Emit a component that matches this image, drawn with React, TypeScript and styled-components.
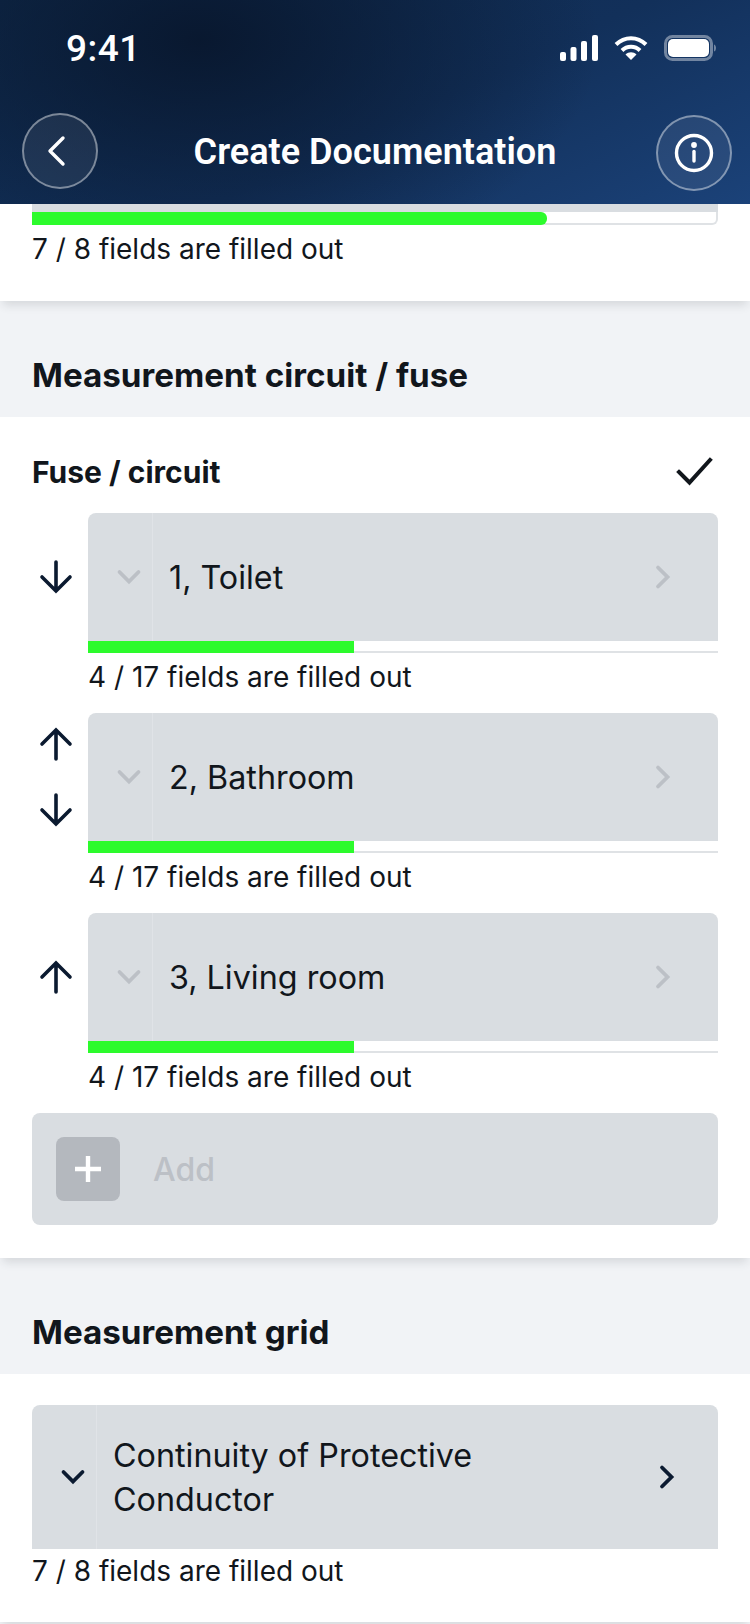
import React, { FC } from 'react';
import styled, { createGlobalStyle } from 'styled-components';

const colours = {
  ink: '#11161c',
  navy: '#0b1a30',
  panel: '#d9dde1',
  page: '#f1f3f6',
  green: '#2cfb2c',
  muted: '#bcc0c6',
};

const GlobalStyle = createGlobalStyle`
  html, body {
    margin: 0;
    padding: 0;
    background: ${colours.page};
    font-family: Inter, "Liberation Sans", sans-serif;
    color: ${colours.ink};
  }
  * { box-sizing: border-box; }
`;

const Screen = styled.div`
  width: 750px;
  height: 1624px;
  overflow: hidden;
  background: ${colours.page};
`;

const Header = styled.header`
  height: 204px;
  background:
    radial-gradient(ellipse 400px 240px at 200px 40px, rgba(8, 22, 44, 0.9), rgba(8, 22, 44, 0) 100%),
    linear-gradient(155deg, #0f2a4c 0%, #12305a 55%, #1b4279 100%);
  color: #fff;
  display: flex;
  flex-direction: column;
`;

const StatusBar = styled.div`
  height: 113px;
  padding: 29px 34px 0 66px;
  display: flex;
  justify-content: space-between;
  align-items: flex-start;
`;

const Clock = styled.span`
  font-family: Roboto, sans-serif;
  font-size: 37px;
  font-weight: 500;
  line-height: 40px;
  letter-spacing: 0.5px;
`;

const StatusIcons = styled.div`
  display: flex;
  align-items: center;
  gap: 16px;
  height: 38px;
`;

const NavBar = styled.div`
  height: 76px;
  padding: 0 18px 0 22px;
  display: flex;
  align-items: center;
  justify-content: space-between;
`;

const RoundButton = styled.div<{ $shift?: number }>`
  width: 76px;
  height: 76px;
  border-radius: 50%;
  border: 2px solid rgba(255, 255, 255, 0.42);
  background: rgba(255, 255, 255, 0.07);
  display: flex;
  align-items: center;
  justify-content: center;
  margin-top: ${(p) => p.$shift ?? 0}px;

  svg.back {
    margin-right: 6px;
  }
`;

const NavTitle = styled.h1`
  margin: 0;
  padding: 2px 4px 0 0;
  font-family: Roboto, sans-serif;
  font-size: 36.100px;
  font-weight: 600;
  line-height: 40px;
  text-align: center;
  flex: 1;
`;

const WhiteSection = styled.section<{ $top: number; $height: number }>`
  background: #fff;
  padding: ${(p) => p.$top}px 32px 0;
  height: ${(p) => p.$height}px;
  box-shadow: 0 7px 9px -3px rgba(40, 50, 60, 0.14);
  position: relative;
`;

const Strip = styled.div`
  height: 8px;
  background: ${colours.panel};
`;

const Track = styled.div<{ $round?: boolean }>`
  height: ${(p) => (p.$round ? 13 : 12)}px;
  background: #fff;
  border-bottom: 2px solid #dfe2e5;
  border-right: ${(p) => (p.$round ? '2px solid #dfe2e5' : 'none')};
  border-radius: ${(p) => (p.$round ? '0 0 6px 0' : '0')};
`;

const Fill = styled.div<{ $round?: boolean }>`
  height: ${(p) => (p.$round ? 13 : 12)}px;
  background: ${colours.green};
  border-radius: ${(p) => (p.$round ? '0 6px 6px 0' : '0')};
`;

const Fields = styled.div<{ $gap?: number }>`
  font-size: 28px;
  line-height: 32px;
  margin-top: ${(p) => p.$gap ?? 8}px;
  color: ${colours.ink};
`;

const SectionHeading = styled.h2<{ $height: number }>`
  margin: 0;
  height: ${(p) => p.$height}px;
  padding: 0 32px 22px;
  display: flex;
  align-items: flex-end;
  font-size: 33.200px;
  line-height: 40px;
  font-weight: 700;
  color: ${colours.ink};
`;

const SubHeader = styled.div`
  display: flex;
  justify-content: space-between;
  align-items: center;
  height: 38px;
  font-size: 30px;
  font-weight: 700;

  svg {
    margin-right: 4px;
  }
`;

const CircuitList = styled.div`
  margin-top: 22px;
  display: flex;
  flex-direction: column;
  gap: 12px;
`;

const CircuitRow = styled.div`
  display: flex;
  height: 188px;
`;

const ArrowColumn = styled.div`
  width: 56px;
  height: 128px;
  flex-shrink: 0;
  display: flex;
  flex-direction: column;
  align-items: center;
  justify-content: center;
  gap: 30px;
  padding-right: 8px;
`;

const CircuitBody = styled.div`
  flex: 1;
`;

const Card = styled.div<{ $height: number }>`
  height: ${(p) => p.$height}px;
  background: ${colours.panel};
  border-radius: 8px 8px 0 0;
  display: flex;
`;

const CardToggle = styled.div`
  width: 65px;
  flex-shrink: 0;
  padding-left: 17px;
  border-right: 1px solid #e0e3e7;
  display: flex;
  align-items: center;
  justify-content: center;
`;

const CardLabel = styled.div`
  flex: 1;
  padding: 2px 0 0 16px;
  font-size: 32.300px;
  line-height: 44px;
  display: flex;
  align-items: center;
`;

const CardNext = styled.div<{ $width: number }>`
  width: ${(p) => p.$width}px;
  display: flex;
  align-items: center;
  justify-content: center;
`;

const AddBar = styled.div`
  margin-top: 12px;
  height: 112px;
  background: ${colours.panel};
  border-radius: 8px;
  display: flex;
  align-items: center;
  padding-left: 24px;
  gap: 33px;
`;

const AddSquare = styled.div`
  width: 64px;
  height: 64px;
  border-radius: 8px;
  background: #b4b8be;
  display: flex;
  align-items: center;
  justify-content: center;
`;

const AddLabel = styled.span`
  font-size: 32px;
  font-weight: 500;
  color: ${colours.muted};
`;

const Chevron: FC<{ dir: 'down' | 'right'; colour: string }> = ({ dir, colour }) => (
  <svg width="28" height="28" viewBox="0 0 28 28" fill="none" stroke={colour} strokeWidth="3.8" strokeLinecap="round" strokeLinejoin="miter">
    {dir === 'down' ? <path d="M4.500 9l9.500 9.500L23.500 9" /> : <path d="M9 4.500l9.500 9.500L9 23.500" />}
  </svg>
);

const Arrow: FC<{ dir: 'up' | 'down' }> = ({ dir }) => (
  <svg width="36" height="36" viewBox="0 0 36 36" fill="none" stroke={colours.navy} strokeWidth="3.6" strokeLinecap="round" strokeLinejoin="miter">
    {dir === 'down' ? <path d="M18 3v29M4 18l14 14 14-14" /> : <path d="M18 33V4M4 18L18 4l14 14" />}
  </svg>
);

const Circuit: FC<{ label: string; up?: boolean; down?: boolean }> = ({ label, up, down }) => (
  <CircuitRow>
    <ArrowColumn>
      {up && <Arrow dir="up" />}
      {down && <Arrow dir="down" />}
    </ArrowColumn>
    <CircuitBody>
      <Card $height={128}>
        <CardToggle>
          <Chevron dir="down" colour={colours.muted} />
        </CardToggle>
        <CardLabel>{label}</CardLabel>
        <CardNext $width={111}>
          <Chevron dir="right" colour={colours.muted} />
        </CardNext>
      </Card>
      <Track>
        <Fill style={{ width: '42.300%' }} />
      </Track>
      <Fields>4 / 17 fields are filled out</Fields>
    </CircuitBody>
  </CircuitRow>
);

const App: FC = () => (
  <Screen>
    <GlobalStyle />
    <Header>
      <StatusBar>
        <Clock>9:41</Clock>
        <StatusIcons>
          <svg width="38" height="26" viewBox="0 0 38 26" fill="#fff">
            <rect x="0" y="17" width="6" height="9" rx="2" />
            <rect x="10.500" y="12" width="6" height="14" rx="2" />
            <rect x="21" y="6" width="6" height="20" rx="2" />
            <rect x="32" y="0" width="6" height="26" rx="2" />
          </svg>
          <svg width="34" height="26" viewBox="0 0 34 26" fill="none" stroke="#fff" strokeWidth="4">
            <path d="M2 9.500C10.500 1 23.500 1 32 9.500" />
            <path d="M8 15.500c5-5 13-5 18 0" />
            <path d="M17 25l-5.500-5.500c3-3 8-3 11 0z" fill="#fff" stroke="none" />
          </svg>
          <svg width="52" height="26" viewBox="0 0 52 26">
            <rect x="1.500" y="1.500" width="46" height="23" rx="7" fill="none" stroke="rgba(255,255,255,0.4)" strokeWidth="3" />
            <rect x="4" y="4" width="41" height="18" rx="5" fill="#fff" />
            <path d="M50 9.500c1.500 .5 2 2 2 3.500s-.5 3-2 3.500z" fill="rgba(255,255,255,0.4)" />
          </svg>
        </StatusIcons>
      </StatusBar>
      <NavBar>
        <RoundButton>
          <svg className="back" width="36" height="36" viewBox="0 0 36 36" fill="none" stroke="#fff" strokeWidth="3.4" strokeLinecap="round" strokeLinejoin="round">
            <path d="M24 5L11 18l13 13" />
          </svg>
        </RoundButton>
        <NavTitle>Create Documentation</NavTitle>
        <RoundButton $shift={4}>
          <svg width="42" height="42" viewBox="0 0 42 42" fill="none" stroke="#fff" strokeWidth="3.4" strokeLinecap="round">
            <circle cx="21" cy="21" r="17.500" />
            <path d="M21 19.500v9.500" />
            <circle cx="21" cy="13" r="1.200" fill="#fff" />
          </svg>
        </RoundButton>
      </NavBar>
    </Header>

    <WhiteSection $top={0} $height={97}>
      <Strip />
      <Track $round>
        <Fill $round style={{ width: '75.300%' }} />
      </Track>
      <Fields>7 / 8 fields are filled out</Fields>
    </WhiteSection>

    <SectionHeading $height={116}>Measurement circuit / fuse</SectionHeading>

    <WhiteSection $top={36} $height={841}>
      <SubHeader>
        Fuse / circuit
        <svg width="38" height="30" viewBox="0 0 38 30" fill="none" stroke={colours.ink} strokeWidth="4" strokeLinecap="square">
          <path d="M3 15l10.500 10.500L34 3" />
        </svg>
      </SubHeader>
      <CircuitList>
        <Circuit label="1, Toilet" down />
        <Circuit label="2, Bathroom" up down />
        <Circuit label="3, Living room" up />
      </CircuitList>
      <AddBar>
        <AddSquare>
          <svg width="30" height="30" viewBox="0 0 30 30" stroke="#fff" strokeWidth="4.400" strokeLinecap="butt">
            <path d="M15 2v26M2 15h26" />
          </svg>
        </AddSquare>
        <AddLabel>Add</AddLabel>
      </AddBar>
    </WhiteSection>

    <SectionHeading $height={116}>Measurement grid</SectionHeading>

    <WhiteSection $top={31} $height={248}>
      <Card $height={144}>
        <CardToggle>
          <Chevron dir="down" colour={colours.navy} />
        </CardToggle>
        <CardLabel>
          Continuity of Protective
          <br />
          Conductor
        </CardLabel>
        <CardNext $width={102}>
          <Chevron dir="right" colour={colours.navy} />
        </CardNext>
      </Card>
      <Fields $gap={6}>7 / 8 fields are filled out</Fields>
    </WhiteSection>
  </Screen>
);

export default App;
